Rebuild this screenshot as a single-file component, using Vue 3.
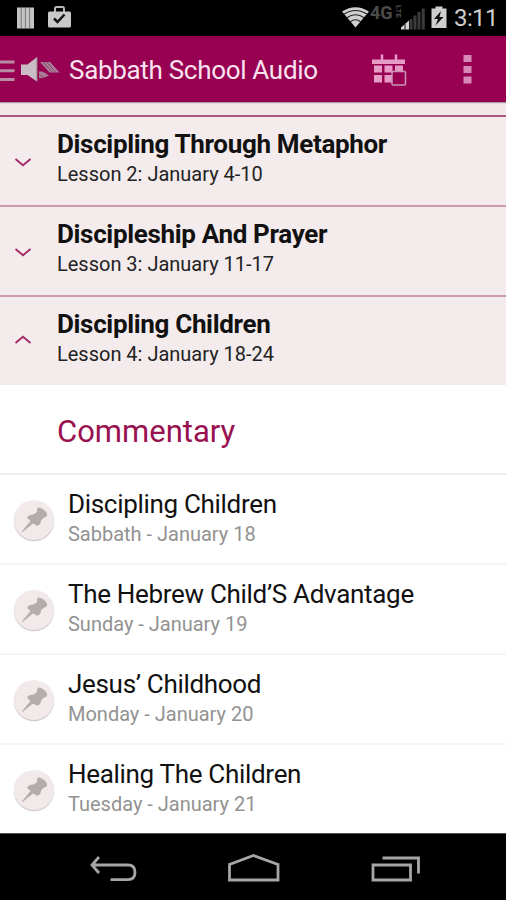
<script setup>
const groups = [
  { title: 'Discipling Through Metaphor', sub: 'Lesson 2: January 4-10', open: false, key: 'a' },
  { title: 'Discipleship And Prayer', sub: 'Lesson 3: January 11-17', open: false, key: 'b' },
  { title: 'Discipling Children', sub: 'Lesson 4: January 18-24', open: true, key: 'c' },
]
const days = [
  { title: 'Discipling Children', sub: 'Sabbath - January 18', key: 'd' },
  { title: 'The Hebrew Child’S Advantage', sub: 'Sunday - January 19', key: 'e' },
  { title: 'Jesus’ Childhood', sub: 'Monday - January 20', key: 'f' },
  { title: 'Healing The Children', sub: 'Tuesday - January 21', key: 'g' },
]
</script>

<template>
  <div class="screen">
    <header class="status">
      <svg width="80" height="36" viewBox="0 0 80 36">
        <path d="M17 7.500h17v21H17z" fill="#c4c4c4" />
        <path d="M21.200 8v20M25.400 8v20M29.600 8v20" stroke="#777" stroke-width="1" />
        <path d="M55 12V8.500q0-1.500 1.500-1.500h6q1.500 0 1.500 1.500V12" fill="none" stroke="#b8b8b8" stroke-width="2" />
        <rect x="48" y="11.500" width="23" height="16" rx="1.500" fill="#c9c9c9" />
        <path d="M54 18.500l3.500 3.500 7-7.500" fill="none" stroke="#111" stroke-width="2.500" />
      </svg>
      <span class="network">4G</span>
      <span class="lte">LTE</span>
      <svg class="right-icons" width="116" height="36" viewBox="338 0 116 36">
        <path d="M342 11.500Q355.500 3 369 11.500L355.500 27.500z" fill="#d0d0d0" />
        <path d="M343.500 14.500Q355.500 6.500 367.500 14.500M346.500 18Q355.500 11.500 364.500 18M350 22Q355.500 17.500 361 22" fill="none" stroke="#222" stroke-width="1.100" />
        <path d="M401 29.500v-2l8-7v9z" fill="#d4d4d4" />
        <path d="M405 24v6" stroke="#111" />
        <path d="M411 19v10.500M415 15.500v14M419 12v17.500M423.200 8.500v21" stroke="#3b3b3b" stroke-width="3" />
        <path d="M431.500 8.500h4V6.500h7v2h4v19.500h-15z" fill="#cfcfcf" />
        <path d="M441 11l-7 8h4l-2.500 6.500 8-8.500h-4z" fill="#111" />
      </svg>
      <span class="clock">3:11</span>
    </header>

    <div class="appbar">
      <svg width="62" height="66" viewBox="0 36 62 66">
        <path d="M0 62h14.500M0 70.700h14.500M0 79.400h14.500" stroke="#b98fa6" stroke-width="3" />
        <path d="M21 64.500h6.500L37 57v24.500L27.500 75H21z" fill="#cbbdc6" />
        <path d="M37 57v24.500" stroke="#8e7c87" stroke-width="1" />
        <path d="M40 62h10l9.500 10.500H49.500z" fill="#ab7f98" />
        <path d="M39 71.500h3.500l6.500 4-6 2.500h-4z" fill="#ab7f98" />
        <path d="M43 62l9.500 10.500M46.500 62l9.500 10.500M39 74l5 4" stroke="#7d3561" stroke-width=".8" />
      </svg>
      <span class="app-title">Sabbath School Audio</span>
      <svg width="136" height="66" viewBox="370 36 136 66">
        <path d="M372 59.500h33v4.500h-33z" fill="#e79cc8" />
        <path d="M382 54.500v6M396 54.500v6" stroke="#e79cc8" stroke-width="2.500" />
        <path d="M374 65.500h8v7h-8zM384.500 65.500h8v7h-8zM395 65.500h8v7h-8zM374 75h8v7.500h-8zM384.500 75h8v7.500h-8z" fill="#e79cc8" />
        <rect x="392" y="71.500" width="13.500" height="13.500" rx="1" fill="#980052" stroke="#c997b5" stroke-width="1.500" />
        <path d="M463.500 55h8v7h-8zM463.500 66h8v7h-8zM463.500 76.500h8v7h-8z" fill="#d889b7" />
      </svg>
    </div>

    <main>
      <div class="peek"></div>
      <section v-for="g in groups" :key="g.key" class="group">
        <svg class="chevron" :class="{ up: g.open }" width="18" height="10" viewBox="0 0 18 10">
          <path :d="g.open ? 'M1.500 8L9 1.800L16.500 8' : 'M1.500 2L9 8.200L16.500 2'" fill="none" stroke="#a52a68" stroke-width="1.900" />
        </svg>
        <div class="texts">
          <div class="title">{{ g.title }}</div>
          <div class="sub">{{ g.sub }}</div>
        </div>
      </section>
      <h2 class="heading">Commentary</h2>
      <article v-for="d in days" :key="d.key" class="day">
        <span class="pin">
          <svg width="40" height="40" viewBox="0 0 40 40">
            <path d="M24 7.500Q26 7 29.500 9.500T33.200 14.500Q33 17.500 30 17.500L27 20.500Q27 24.500 23.300 25.700L19 23.500 8.500 32 7.800 31.500 16.500 21 13 17.700Q15 14.500 19.500 14.500L23 12Q22.500 9 24 7.500z" fill="#b5acad" />
          </svg>
        </span>
        <div class="texts">
          <div class="title">{{ d.title }}</div>
          <div class="sub">{{ d.sub }}</div>
        </div>
      </article>
    </main>

    <nav class="navbar">
      <svg width="506" height="66" viewBox="0 834 506 66" fill="none" stroke="#a6a6a6" stroke-width="2.800">
        <path d="M99 857l-7 8 7 8M92 865h36q7 0 7 7.300t-7 7.300h-17.500" />
        <path d="M229.500 880v-15.500l24-9 24.500 9V880z" />
        <path d="M373 865h37.500v15H373zM382.500 858h36v15.500" />
      </svg>
    </nav>
  </div>
</template>

<style>
body { background: #fff; }
</style>

<style scoped>
.screen { width: 506px; height: 900px; overflow: hidden; font-family: Roboto, "Liberation Sans", sans-serif; background: #fff; display: flex; flex-direction: column; }
svg { display: block; flex: none; }
.status { height: 36px; flex: none; background: #000; display: flex; position: relative; }
.right-icons { margin-left: 258px; }
.network { position: absolute; left: 370px; top: 2px; font-size: 18px; line-height: 22px; font-weight: 700; color: #4c4c4c; }
.lte { position: absolute; left: 394px; top: 5px; height: 15px; font-size: 8px; line-height: 8px; font-weight: 700; color: #4c4c4c; writing-mode: vertical-rl; }
.clock { font-size: 24px; line-height: 37px; color: #cfcfcf; white-space: nowrap; letter-spacing: -0.6px; }
.appbar { height: 66px; flex: none; background: #980052; display: flex; align-items: center; box-shadow: 0 1px 1px #a99aa0; position: relative; }
.app-title { margin-left: 7px; width: 301px; font-size: 26px; line-height: 34px; color: #f9e3ef; white-space: nowrap; padding-top: 1px; letter-spacing: -0.31px; }
main { flex: none; height: 731px; }
.peek { height: 13px; background: #f1e7e7; }
.group { height: 90px; box-sizing: border-box; background: #f4ebec; border-top: 2px solid #cb9aad; display: flex; padding-left: 14px; }
.peek + .group { border-color: #aa5b80; }
.chevron { margin-top: 40px; }
.chevron.up { margin-top: 38px; }
.group .texts { margin-left: 25px; padding-top: 10px; }
.texts, .texts div { white-space: nowrap; }
.title { font-size: 26px; line-height: 34px; color: #111; letter-spacing: -0.31px; }
.group .title { font-weight: 700; letter-spacing: -0.33px; }
.sub { font-size: 20px; line-height: 26px; color: #222; letter-spacing: -0.01px; }
.heading { margin: 0; height: 90px; box-sizing: border-box; border-bottom: 2px solid #f0eeee; padding-left: 57px; font-size: 31px; line-height: 94px; font-weight: 400; color: #991050; }
.day { height: 90px; box-sizing: border-box; border-bottom: 2px solid #f6f3f3; display: flex; padding-left: 14px; }
.day:last-child { border-color: #fff; }
.pin { width: 40px; height: 40px; border-radius: 50%; background: #f2eaea; box-shadow: 0 1px 1px #c6bebe; margin-top: 25px; }
.day .texts { margin-left: 14px; padding-top: 12px; }
.day .sub { color: #929292; }
.navbar { height: 67px; flex: none; background: #000; position: relative; box-sizing: border-box; border-top: 1px solid #555; }
</style>
